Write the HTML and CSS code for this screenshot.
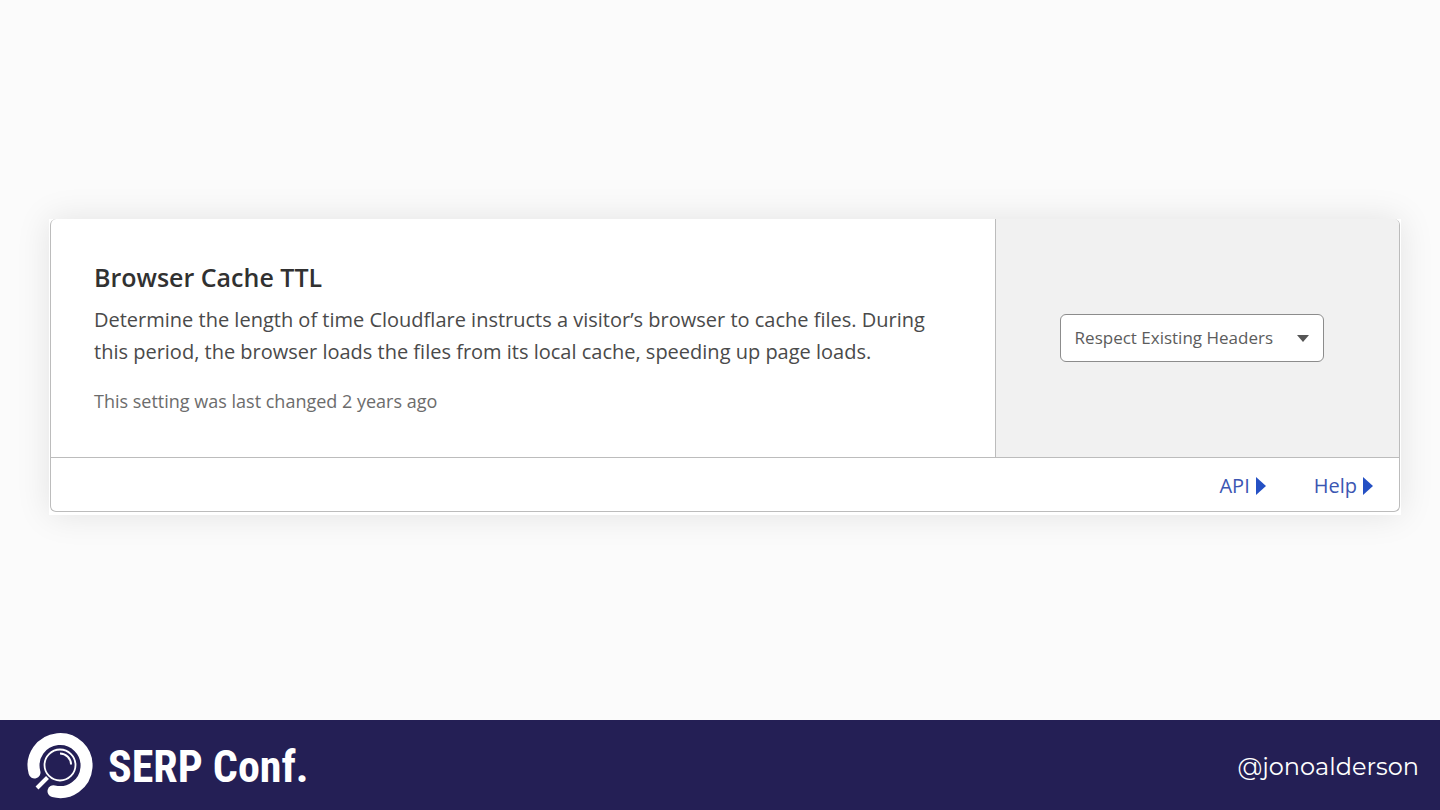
FILE: index.html
```html
<!DOCTYPE html>
<html lang="en">
<head>
    <meta charset="UTF-8">
    <meta name="viewport" content="width=device-width, initial-scale=1.0">
    <title>Browser Cache TTL</title>
    <link rel="stylesheet" href="styles.css">
</head>
<body>
    <main>
        <div class="frame">
            <section class="card">
                <div class="card-body">
                    <div class="info">
                        <h1>Browser Cache TTL</h1>
                        <p class="description">Determine the length of time Cloudflare instructs a visitor’s browser to cache files. During this period, the browser loads the files from its local cache, speeding up page loads.</p>
                        <p class="changed">This setting was last changed 2 years ago</p>
                    </div>
                    <div class="control">
                        <div class="select-wrap">
                            <select id="ttl" aria-label="Browser Cache TTL">
                                <option>Respect Existing Headers</option>
                            </select>
                            <svg class="arrow" viewBox="0 0 12 7" aria-hidden="true"><path d="M0 0h12L6 7z"/></svg>
                        </div>
                    </div>
                </div>
                <div class="card-footer">
                    <a href="#api">API <svg viewBox="0 0 10 18" aria-hidden="true"><path d="M0 0l10 9-10 9z"/></svg></a>
                    <a href="#help">Help <svg viewBox="0 0 10 18" aria-hidden="true"><path d="M0 0l10 9-10 9z"/></svg></a>
                </div>
            </section>
        </div>
    </main>

    <footer>
        <div class="brand">
            <svg class="logo" viewBox="0 0 66 68" aria-hidden="true">
                <g fill="none" stroke="#fff">
                    <path d="M7.500 41.500A26.500 26.500 0 1 1 26.500 60.200" stroke-width="12" stroke-linecap="round"/>
                    <circle cx="33" cy="34" r="15.500" stroke-width="1.800"/>
                    <path d="M33 22.500a11 11 0 0 1 11 11" stroke-width="2"/>
                    <path d="M20.500 46.500L10 57" stroke-width="4"/>
                </g>
            </svg>
            <span class="brand-name">SERP Conf.</span>
        </div>
        <span class="handle">@jonoalderson</span>
    </footer>
</body>
</html>
```
FILE: styles.css
```css
* {
    box-sizing: border-box;
}
body {
    margin: 0;
    min-height: 100vh;
    display: flex;
    flex-direction: column;
    background-color: #fbfbfb;
    font-family: "Segoe UI", "Open Sans", "Noto Sans", sans-serif;
}
main {
    flex: 1;
    display: flex;
    align-items: center;
    padding: 13px 39px 0 49px;
}
.frame {
    flex: 1;
    padding: 0 1px 3px;
    background-color: white;
    box-shadow: 0 0 32px rgba(0, 0, 0, 0.1);
}
.card {
    border: 1px solid #bcbcbc;
    border-top: none;
    border-radius: 6px;
    overflow: hidden;
}
.card-body {
    display: grid;
    grid-template-columns: 7fr 3fr;
    border-bottom: 1px solid #bcbcbc;
}
.info {
    padding: 39px 43px 40px;
}
h1 {
    margin: 0 0 8px;
    font-size: 25px;
    line-height: 38px;
    font-weight: 600;
    color: #313131;
}
p {
    margin: 0;
}
.description {
    font-size: 20px;
    line-height: 32px;
    color: #4a4a4a;
}
.changed {
    margin-top: 17px;
    font-size: 18px;
    line-height: 32px;
    color: #6c6c6c;
}
.control {
    display: flex;
    align-items: center;
    padding: 0 64px;
    border-left: 1px solid #bcbcbc;
    background-color: #f1f1f1;
}
.select-wrap {
    position: relative;
    flex: 1;
    max-width: 264px;
}
select {
    appearance: none;
    display: block;
    width: 100%;
    height: 48px;
    padding: 0 36px 0 14px;
    border: 1px solid #8c8c8c;
    border-radius: 6px;
    background-color: white;
    color: #5c5c5c;
    font-family: inherit;
    font-size: 17px;
}
.arrow {
    position: absolute;
    top: 21px;
    right: 15px;
    width: 12px;
    height: 7px;
    fill: #555;
    pointer-events: none;
}
.card-footer {
    display: flex;
    justify-content: flex-end;
    align-items: center;
    gap: 48px;
    height: 53px;
    padding: 3px 26px 0;
}
.card-footer a {
    display: flex;
    align-items: center;
    gap: 6px;
    color: #3b56b2;
    font-size: 20px;
    text-decoration: none;
}
.card-footer svg {
    width: 10px;
    height: 18px;
    fill: #2450c4;
}
footer {
    display: flex;
    justify-content: space-between;
    align-items: center;
    height: 90px;
    padding: 0 21px 0 27px;
    background-color: #241f55;
    color: white;
}
.brand {
    display: flex;
    align-items: center;
    gap: 15px;
}
.logo {
    width: 66px;
    height: 68px;
}
.brand-name {
    padding-top: 3px;
    font-family: "Roboto Condensed", "Liberation Sans Narrow", Roboto, sans-serif;
    font-size: 44px;
    font-weight: 700;
}
.handle {
    padding-top: 3px;
    font-family: Montserrat, Lato, sans-serif;
    font-size: 24px;
}
```
